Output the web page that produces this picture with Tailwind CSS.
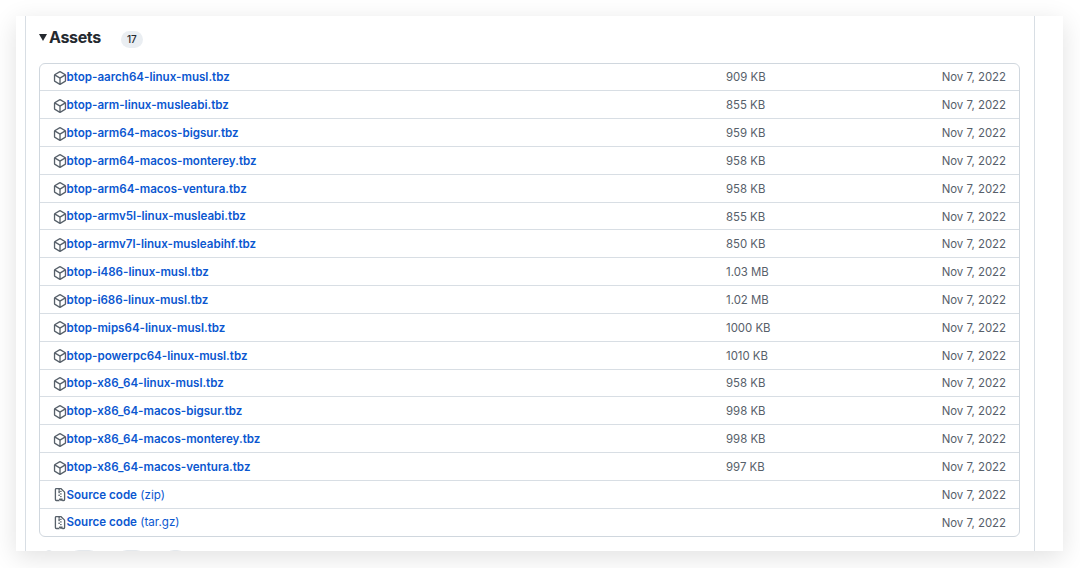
<!DOCTYPE html>
<html>
<head>
<meta charset="utf-8">
<script src="https://cdn.jsdelivr.net/npm/@tailwindcss/browser@4"></script>
</head>
<body class="bg-white font-['Inter',sans-serif] antialiased">
<svg class="hidden"><defs>
<symbol id="pkg" viewBox="0 0 16 16"><path fill="#57606a" d="m8.878.392 5.25 3.045c.54.314.872.89.872 1.514v6.098a1.75 1.75 0 0 1-.872 1.514l-5.25 3.045a1.75 1.75 0 0 1-1.756 0l-5.25-3.045A1.75 1.75 0 0 1 1 11.049V4.951c0-.624.332-1.201.872-1.514L7.122.392a1.75 1.75 0 0 1 1.756 0ZM7.875 1.69l-4.63 2.685L8 7.133l4.755-2.758-4.63-2.685a.248.248 0 0 0-.25 0ZM2.5 5.677v5.372c0 .09.047.171.125.216l4.625 2.683V8.432Zm6.25 8.271 4.625-2.683a.25.25 0 0 0 .125-.216V5.677L8.75 8.432Z"/></symbol>
<symbol id="zip" viewBox="0 0 16 16"><path fill="#57606a" d="M3.5 1.75v11.5c0 .138.112.25.25.25h3.17a.75.75 0 0 1 0 1.5H3.75A1.75 1.75 0 0 1 2 13.25V1.75C2 .784 2.784 0 3.75 0h5.086c.464 0 .909.184 1.237.513l3.414 3.414c.329.328.513.773.513 1.237v8.086A1.75 1.75 0 0 1 12.25 15h-.5a.75.75 0 0 1 0-1.5h.5a.25.25 0 0 0 .25-.25V5.164a.25.25 0 0 0-.073-.177L9.013 1.573a.25.25 0 0 0-.177-.073H7.25a.75.75 0 0 1 0 1.5h-.5a.75.75 0 0 1 0-1.5h-3a.25.25 0 0 0-.25.25Zm3.75 1.75a.75.75 0 0 1 0 1.5h-.5a.75.75 0 0 1 0-1.5ZM6 5.25a.75.75 0 0 1 .75-.75h.5a.75.75 0 0 1 0 1.5h-.5A.75.75 0 0 1 6 5.25Zm.75 2.25h.5a.75.75 0 0 1 0 1.5h-.5a.75.75 0 0 1 0-1.5ZM8 6.75A.75.75 0 0 1 8.75 6h.5a.75.75 0 0 1 0 1.5h-.5A.75.75 0 0 1 8 6.75ZM8.75 3h.5a.75.75 0 0 1 0 1.5h-.5a.75.75 0 0 1 0-1.5ZM8 9.75A.75.75 0 0 1 8.75 9h.5a.75.75 0 0 1 0 1.5h-.5A.75.75 0 0 1 8 9.75Zm-1 2.5v2.625a.25.25 0 0 0 .375.216l1.5-.865a.25.25 0 0 1 .25 0l1.5.865a.25.25 0 0 0 .375-.216V12.25a.25.25 0 0 0-.25-.25h-3.5a.25.25 0 0 0-.25.25Z"/></symbol>
</defs></svg>

<div class="p-4 h-[568px]">
<div class="relative h-[535px] w-[1047px] bg-white overflow-hidden shadow-[0_6px_24px_rgba(0,0,0,0.12)]">
  <div class="flex h-full">
    <div class="w-[9px] shrink-0"></div>
    <div class="w-[1010px] shrink-0 border-x border-[#d8dee4] pl-[13px] pr-[14px] pt-[9px]">
      <div class="flex items-center h-[24px]">
        <span class="w-0 h-0 border-x-[4px] border-x-transparent border-t-[7px] border-t-[#24292f] mr-[2px]"></span>
        <span class="text-[16px] leading-[24px] font-bold text-[#24292f] tracking-[-0.35px]">Assets</span>
        <span class="ml-[20px] mt-[4px] w-[22px] h-[17px] rounded-full bg-[#eaeef2] text-[10px] leading-[17px] text-center font-medium text-[#24292f]">17</span>
      </div>
      <div class="mt-[13.5px] h-[474px] flex flex-col border border-[#d0d7de] rounded-md text-[11.4px] text-[#57606a]">
        <div class="flex-1 flex items-center pt-[2px] pl-[12.5px] pr-[13px] border-b border-[#d8dee4]"><svg class="w-[14px] h-[14px] shrink-0"><use href="#pkg"/></svg><a class="text-[11.6px] font-semibold text-[#0b57d0]">btop-aarch64-linux-musl.tbz</a><span class="ml-auto w-[60px]">909 KB</span><span class="ml-[154px] w-[66px] whitespace-nowrap text-right">Nov 7, 2022</span></div>
        <div class="flex-1 flex items-center pt-[2px] pl-[12.5px] pr-[13px] border-b border-[#d8dee4]"><svg class="w-[14px] h-[14px] shrink-0"><use href="#pkg"/></svg><a class="text-[11.6px] font-semibold text-[#0b57d0]">btop-arm-linux-musleabi.tbz</a><span class="ml-auto w-[60px]">855 KB</span><span class="ml-[154px] w-[66px] whitespace-nowrap text-right">Nov 7, 2022</span></div>
        <div class="flex-1 flex items-center pt-[2px] pl-[12.5px] pr-[13px] border-b border-[#d8dee4]"><svg class="w-[14px] h-[14px] shrink-0"><use href="#pkg"/></svg><a class="text-[11.6px] font-semibold text-[#0b57d0]">btop-arm64-macos-bigsur.tbz</a><span class="ml-auto w-[60px]">959 KB</span><span class="ml-[154px] w-[66px] whitespace-nowrap text-right">Nov 7, 2022</span></div>
        <div class="flex-1 flex items-center pt-[2px] pl-[12.5px] pr-[13px] border-b border-[#d8dee4]"><svg class="w-[14px] h-[14px] shrink-0"><use href="#pkg"/></svg><a class="text-[11.6px] font-semibold text-[#0b57d0]">btop-arm64-macos-monterey.tbz</a><span class="ml-auto w-[60px]">958 KB</span><span class="ml-[154px] w-[66px] whitespace-nowrap text-right">Nov 7, 2022</span></div>
        <div class="flex-1 flex items-center pt-[2px] pl-[12.5px] pr-[13px] border-b border-[#d8dee4]"><svg class="w-[14px] h-[14px] shrink-0"><use href="#pkg"/></svg><a class="text-[11.6px] font-semibold text-[#0b57d0]">btop-arm64-macos-ventura.tbz</a><span class="ml-auto w-[60px]">958 KB</span><span class="ml-[154px] w-[66px] whitespace-nowrap text-right">Nov 7, 2022</span></div>
        <div class="flex-1 flex items-center pt-[2px] pl-[12.5px] pr-[13px] border-b border-[#d8dee4]"><svg class="w-[14px] h-[14px] shrink-0"><use href="#pkg"/></svg><a class="text-[11.6px] font-semibold text-[#0b57d0]">btop-armv5l-linux-musleabi.tbz</a><span class="ml-auto w-[60px]">855 KB</span><span class="ml-[154px] w-[66px] whitespace-nowrap text-right">Nov 7, 2022</span></div>
        <div class="flex-1 flex items-center pt-[2px] pl-[12.5px] pr-[13px] border-b border-[#d8dee4]"><svg class="w-[14px] h-[14px] shrink-0"><use href="#pkg"/></svg><a class="text-[11.6px] font-semibold text-[#0b57d0]">btop-armv7l-linux-musleabihf.tbz</a><span class="ml-auto w-[60px]">850 KB</span><span class="ml-[154px] w-[66px] whitespace-nowrap text-right">Nov 7, 2022</span></div>
        <div class="flex-1 flex items-center pt-[2px] pl-[12.5px] pr-[13px] border-b border-[#d8dee4]"><svg class="w-[14px] h-[14px] shrink-0"><use href="#pkg"/></svg><a class="text-[11.6px] font-semibold text-[#0b57d0]">btop-i486-linux-musl.tbz</a><span class="ml-auto w-[60px]">1.03 MB</span><span class="ml-[154px] w-[66px] whitespace-nowrap text-right">Nov 7, 2022</span></div>
        <div class="flex-1 flex items-center pt-[2px] pl-[12.5px] pr-[13px] border-b border-[#d8dee4]"><svg class="w-[14px] h-[14px] shrink-0"><use href="#pkg"/></svg><a class="text-[11.6px] font-semibold text-[#0b57d0]">btop-i686-linux-musl.tbz</a><span class="ml-auto w-[60px]">1.02 MB</span><span class="ml-[154px] w-[66px] whitespace-nowrap text-right">Nov 7, 2022</span></div>
        <div class="flex-1 flex items-center pt-[2px] pl-[12.5px] pr-[13px] border-b border-[#d8dee4]"><svg class="w-[14px] h-[14px] shrink-0"><use href="#pkg"/></svg><a class="text-[11.6px] font-semibold text-[#0b57d0]">btop-mips64-linux-musl.tbz</a><span class="ml-auto w-[60px]">1000 KB</span><span class="ml-[154px] w-[66px] whitespace-nowrap text-right">Nov 7, 2022</span></div>
        <div class="flex-1 flex items-center pt-[2px] pl-[12.5px] pr-[13px] border-b border-[#d8dee4]"><svg class="w-[14px] h-[14px] shrink-0"><use href="#pkg"/></svg><a class="text-[11.6px] font-semibold text-[#0b57d0]">btop-powerpc64-linux-musl.tbz</a><span class="ml-auto w-[60px]">1010 KB</span><span class="ml-[154px] w-[66px] whitespace-nowrap text-right">Nov 7, 2022</span></div>
        <div class="flex-1 flex items-center pt-[2px] pl-[12.5px] pr-[13px] border-b border-[#d8dee4]"><svg class="w-[14px] h-[14px] shrink-0"><use href="#pkg"/></svg><a class="text-[11.6px] font-semibold text-[#0b57d0]">btop-x86_64-linux-musl.tbz</a><span class="ml-auto w-[60px]">958 KB</span><span class="ml-[154px] w-[66px] whitespace-nowrap text-right">Nov 7, 2022</span></div>
        <div class="flex-1 flex items-center pt-[2px] pl-[12.5px] pr-[13px] border-b border-[#d8dee4]"><svg class="w-[14px] h-[14px] shrink-0"><use href="#pkg"/></svg><a class="text-[11.6px] font-semibold text-[#0b57d0]">btop-x86_64-macos-bigsur.tbz</a><span class="ml-auto w-[60px]">998 KB</span><span class="ml-[154px] w-[66px] whitespace-nowrap text-right">Nov 7, 2022</span></div>
        <div class="flex-1 flex items-center pt-[2px] pl-[12.5px] pr-[13px] border-b border-[#d8dee4]"><svg class="w-[14px] h-[14px] shrink-0"><use href="#pkg"/></svg><a class="text-[11.6px] font-semibold text-[#0b57d0]">btop-x86_64-macos-monterey.tbz</a><span class="ml-auto w-[60px]">998 KB</span><span class="ml-[154px] w-[66px] whitespace-nowrap text-right">Nov 7, 2022</span></div>
        <div class="flex-1 flex items-center pt-[2px] pl-[12.5px] pr-[13px] border-b border-[#d8dee4]"><svg class="w-[14px] h-[14px] shrink-0"><use href="#pkg"/></svg><a class="text-[11.6px] font-semibold text-[#0b57d0]">btop-x86_64-macos-ventura.tbz</a><span class="ml-auto w-[60px]">997 KB</span><span class="ml-[154px] w-[66px] whitespace-nowrap text-right">Nov 7, 2022</span></div>
        <div class="flex-1 flex items-center pt-[2px] pl-[12.5px] pr-[13px] border-b border-[#d8dee4]"><svg class="w-[14px] h-[14px] shrink-0"><use href="#zip"/></svg><a class="text-[11.6px] text-[#0b57d0]"><span class="font-semibold">Source code</span> (zip)</a><span class="ml-auto w-[60px]"></span><span class="ml-[154px] w-[66px] whitespace-nowrap text-right">Nov 7, 2022</span></div>
        <div class="flex-1 flex items-center pt-[2px] pl-[12.5px] pr-[13px]"><svg class="w-[14px] h-[14px] shrink-0"><use href="#zip"/></svg><a class="text-[11.6px] text-[#0b57d0]"><span class="font-semibold">Source code</span> (tar.gz)</a><span class="ml-auto w-[60px]"></span><span class="ml-[154px] w-[66px] whitespace-nowrap text-right">Nov 7, 2022</span></div>
      </div>
      <div class="flex mt-[13px] h-[8px] pl-[5px]">
        <span class="w-[10px] h-[20px] rounded-full bg-[#f6f8fa] border border-[#e4e8ec]"></span>
        <span class="ml-[15px] w-[30px] h-[20px] rounded-full bg-[#f6f8fa] border border-[#e4e8ec]"></span>
        <span class="ml-[18px] w-[29px] h-[20px] rounded-full bg-[#f6f8fa] border border-[#e4e8ec]"></span>
        <span class="ml-[18px] w-[23px] h-[20px] rounded-full bg-[#f6f8fa] border border-[#e4e8ec]"></span>
      </div>
    </div>
  </div>
</div>
</div>
</body>
</html>
